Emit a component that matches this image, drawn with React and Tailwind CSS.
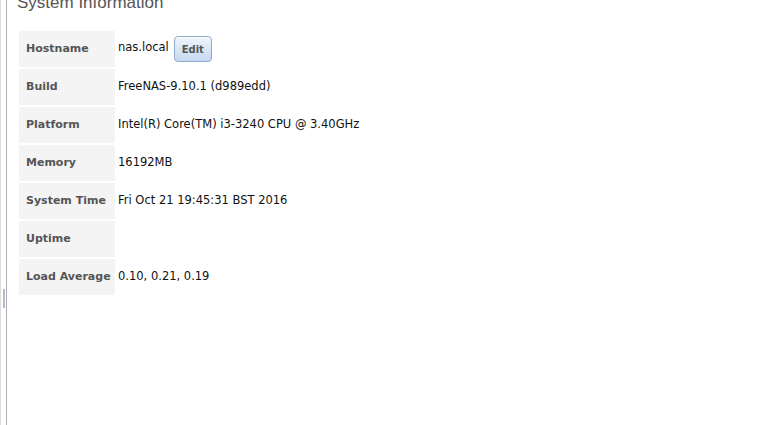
import React from 'react';

const rows = [
  { label: 'Hostname', value: 'nas.local', edit: true },
  { label: 'Build', value: 'FreeNAS-9.10.1 (d989edd)' },
  { label: 'Platform', value: 'Intel(R) Core(TM) i3-3240 CPU @ 3.40GHz' },
  { label: 'Memory', value: '16192MB' },
  { label: 'System Time', value: 'Fri Oct 21 19:45:31 BST 2016' },
  { label: 'Uptime', value: '' },
  { label: 'Load Average', value: '0.10, 0.21, 0.19' },
];

const InfoRow = ({ label, value, edit }) => (
  <tr className="h-[36px]">
    <th className="w-[96px] bg-[#f4f4f4] pl-[7px] text-left align-middle text-[11px] font-bold text-[#555]">
      {label}
    </th>
    <td className="pl-[1px] align-middle text-[11.5px] text-[#111]">
      <div className="flex items-center gap-[5px]">
        <span className={edit ? '-mt-[2px]' : ''}>{value}</span>
        {edit && (
          <button className="h-[26px] w-[38px] rounded-[4px] border border-[#8fa9c9] bg-gradient-to-b from-[#eef4fc] to-[#c6d9f1] text-[10px] font-bold text-[#555] shadow-[inset_0_1px_0_#fff]">
            Edit
          </button>
        )}
      </div>
    </td>
  </tr>
);

export default function App() {
  return (
    <div className="flex h-[425px] w-[764px] overflow-hidden bg-white font-['DejaVu_Sans',sans-serif] text-[11px]">
      <div className="relative h-full w-[7px] shrink-0 border-l border-[#dcdcdc] border-r border-r-[#a9adb8]">
        <div className="absolute left-[2px] top-[289px] h-[19px] w-[2px] bg-[#b8bcc6]"></div>
      </div>
      <div className="flex-1 pl-[10px]">
        <h2 className="-mt-[7px] font-['Liberation_Sans',Arial,sans-serif] text-[17px] leading-[20px] text-[#555]">
          System Information
        </h2>
        <table className="mt-[16px] border-separate border-spacing-[2px]">
          <tbody>
            {rows.map((r) => (
              <InfoRow key={r.label} {...r} />
            ))}
          </tbody>
        </table>
      </div>
    </div>
  );
}
